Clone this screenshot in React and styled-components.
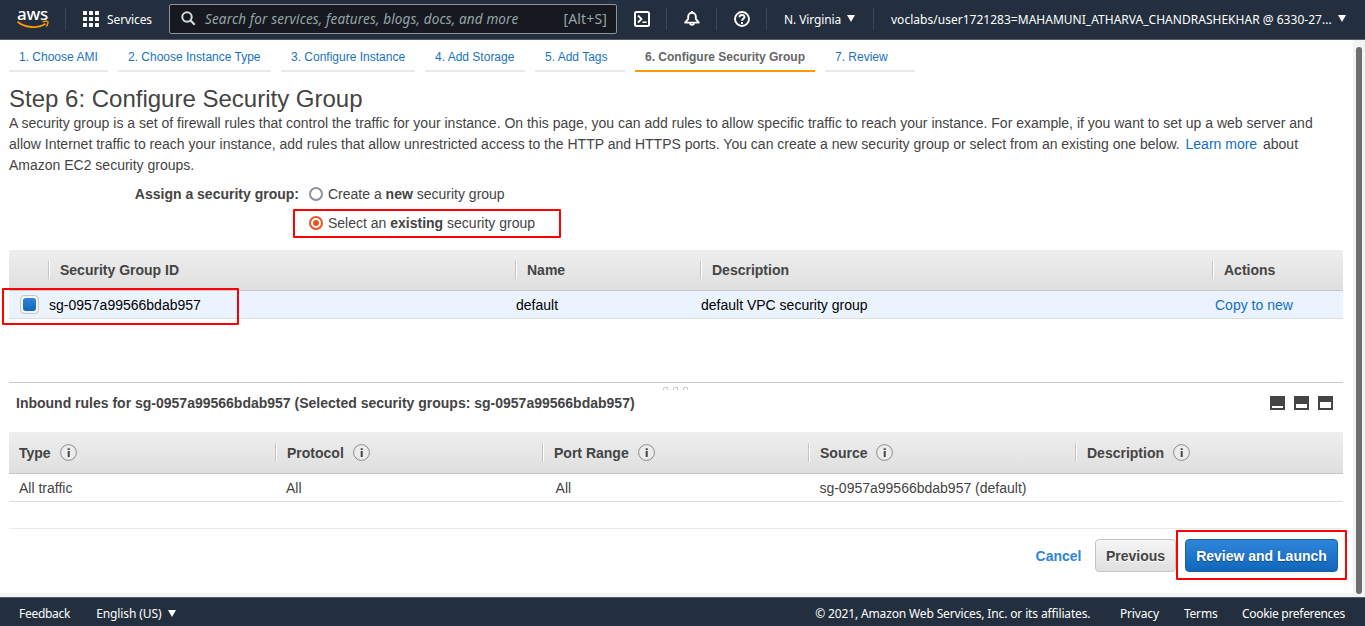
import React from 'react';
import styled, { createGlobalStyle, css } from 'styled-components';

const GlobalStyle = createGlobalStyle`
  * { box-sizing: border-box; }
  html, body { margin: 0; padding: 0; overflow: hidden; }
  body { font-family: "Liberation Sans", Arial, sans-serif; font-size: 14px; color: #444; background: #fff; }
`;

const Page = styled.div`
  display: flex;
  flex-direction: column;
  width: 1365px;
  height: 626px;
`;

const TopBar = styled.header`
  display: flex;
  align-items: center;
  flex: none;
  height: 40px;
  padding: 0 17px 1px 17px;
  background: #232f3e;
  border-bottom: 1px solid #545b64;
  color: #fff;
  font: 12px/20px "Noto Sans", sans-serif;
  white-space: nowrap;
  & > * {
    flex-shrink: 0;
  }
`;

const Logo = styled.div`
  display: flex;
  flex-direction: column;
  align-items: center;
  width: 31px;
  height: 23px;
  margin-right: 17px;
  margin-top: 1px;
`;

const LogoText = styled.span`
  font: 500 17px/15px "Noto Sans", sans-serif;
  letter-spacing: -0.3px;
  height: 14px;
  margin-top: -2px;
`;

const LogoSmile = styled.svg`
  flex: none;
`;

const Divider = styled.span`
  width: 1px;
  height: 22px;
  margin-bottom: 1px;
  background: #414750;
`;

const ServicesButton = styled.div`
  display: flex;
  align-items: center;
  gap: 8px;
  width: 86px;
  margin: 0 0 0 17px;
  letter-spacing: -0.1px;
`;

const Label = styled.span`
  padding-top: 1px;
`;

const SearchBox = styled.div`
  display: flex;
  align-items: center;
  width: 448px;
  height: 30px;
  margin-top: -1px;
  padding: 0 9px 0 11px;
  background: #16191f;
  border: 1px solid #879596;
  border-radius: 2px;
  color: #95a5a6;
  font-size: 14px;
`;

const SearchHint = styled.span`
  flex: 1;
  margin-left: 9px;
  font-size: 13.5px;
  letter-spacing: 0.15px;
  font-style: italic;
`;

const SearchKeys = styled.span`
  letter-spacing: 0.15px;
`;

const IconSlot = styled.span`
  display: flex;
  justify-content: center;
  width: 49px;
  margin-top: -1px;
`;

const Menu = styled.span`
  display: flex;
  align-items: center;
  gap: 6px;
  width: ${(p) => (p.$width ? `${p.$width}px` : 'auto')};
  padding-left: 17px;
  letter-spacing: ${(p) => p.$track || 0}px;
`;

const Middle = styled.div`
  display: flex;
  flex: none;
  height: 557px;
`;

const Content = styled.main`
  width: 1353px;
  height: 553px;
  padding: 0 10px 0 9px;
`;

const ScrollTrack = styled.div`
  width: 12px;
  padding: 7px 3px 3px;
  background: #f2f3f3;
`;

const ScrollThumb = styled.div`
  height: 547px;
  border-radius: 3px;
  background: #6e6e6e;
`;

const Strip = styled.div`
  display: flex;
  flex-direction: column;
  border-bottom: 4px solid #f2f3f3;
`;

const Tabs = styled.nav`
  display: flex;
  gap: 10px;
  height: 32px;
`;

const Tab = styled.span`
  width: ${(p) => p.$width}px;
  padding: 7px 0 0 10px;
  font-size: 12px;
  line-height: 20px;
  white-space: nowrap;
  color: ${(p) => (p.$active ? '#666' : '#1873bf')};
  font-weight: ${(p) => (p.$active ? 700 : 400)};
  border-bottom: 2px solid ${(p) => (p.$active ? '#ff9900' : '#eaeaea')};
`;

const Title = styled.h1`
  margin: 12px 0 0;
  font-size: 24px;
  font-weight: 400;
  line-height: 29px;
`;

const Intro = styled.p`
  margin: 0;
  height: 63px;
  line-height: 21px;
  white-space: nowrap;
`;

const Link = styled.a`
  color: #146ec4;
  margin: ${(p) => p.$margin || 0};
`;

const Assign = styled.div`
  display: grid;
  grid-template-columns: 290px auto;
  column-gap: 10px;
  height: 74px;
  padding-top: 4px;
  line-height: 29px;
`;

const AssignLabel = styled.b`
  text-align: right;
`;

const RadioRow = styled.div`
  display: flex;
  align-items: center;
  gap: 5px;
  height: 29px;
`;

const Radio = styled.span`
  display: flex;
  align-items: center;
  justify-content: center;
  width: 14px;
  height: 14px;
  margin-bottom: 1px;
  border-radius: 50%;
  border: 2px solid ${(p) => (p.$on ? '#e95420' : '#8f8f9d')};
  &::after {
    content: '';
    width: 6px;
    height: 6px;
    border-radius: 50%;
    background: ${(p) => (p.$on ? '#e95420' : 'transparent')};
  }
`;

const HeadRow = styled.div`
  display: grid;
  grid-template-columns: ${(p) => p.$cols};
  align-items: center;
  height: ${(p) => p.$height}px;
  background: linear-gradient(#eeeeee, #dfdfdf);
  border-bottom: 1px solid #c7c7c7;
  font-weight: 700;
`;

const HeadCell = styled.div`
  display: flex;
  align-items: center;
  gap: 9px;
  height: ${(p) => p.$height || 18}px;
  padding-left: 10px;
  ${(p) =>
    p.$line &&
    css`
      padding-left: 11px;
      border-left: 1px solid #c4c4c4;
      box-shadow: inset 1px 0 #fff;
    `}
`;

const DataRow = styled.div`
  display: grid;
  grid-template-columns: ${(p) => p.$cols};
  align-items: center;
  height: 28px;
  border-bottom: 1px solid #ddd;
  background: ${(p) => (p.$selected ? '#eaf3fe' : '#fff')};
  color: ${(p) => (p.$selected ? '#000' : '#444')};
`;

const Check = styled.span`
  display: flex;
  align-items: center;
  justify-content: center;
  width: 19px;
  height: 19px;
  margin-left: 11px;
  border: 1px solid #c8c8c8;
  border-radius: 4px;
  background: #f3f3f3;
  &::after {
    content: '';
    width: 13px;
    height: 13px;
    border-radius: 3px;
    background: linear-gradient(#2e85d8, #1166bb);
  }
`;

const Splitter = styled.div`
  display: flex;
  justify-content: center;
  gap: 5px;
  height: 8px;
  margin-top: 63px;
  padding: 4px 2px 0 0;
  border-top: 1px solid #c8c8c8;
`;

const Grip = styled.span`
  width: 5px;
  height: 3px;
  border: 1px solid #c4c4c4;
  border-bottom: 0;
  border-radius: 2px 2px 0 0;
`;

const PanelTitle = styled.div`
  display: flex;
  align-items: center;
  justify-content: space-between;
  height: 42px;
  padding: 0 10px 16px 7px;
  font-weight: 700;
`;

const PaneIcons = styled.div`
  display: flex;
  gap: 9px;
`;

const PaneIcon = styled.span`
  width: 15px;
  height: 14px;
  padding: ${(p) => p.$top}px 2px 2px;
  background: #444;
  &::after {
    content: '';
    display: block;
    height: 100%;
    background: #fff;
  }
`;

const Actions = styled.div`
  display: flex;
  align-items: center;
  justify-content: flex-end;
  height: 54px;
  margin-top: 26px;
  padding-right: 5px;
  border-top: 1px solid #eaeaea;
`;

const CancelLink = styled.a`
  margin-right: 13.5px;
  color: #2e85d8;
  font-weight: 700;
`;

const Button = styled.span`
  display: flex;
  align-items: center;
  justify-content: center;
  width: ${(p) => p.$width}px;
  height: 33px;
  border-radius: 4px;
  font-weight: 700;
  border: 1px solid ${(p) => (p.$primary ? '#1a5fa8' : '#c4c4c4')};
  color: ${(p) => (p.$primary ? '#fff' : '#444')};
  background: ${(p) =>
    p.$primary ? 'linear-gradient(#2e86db, #1166bb)' : 'linear-gradient(#f6f6f6, #dfdfdf)'};
  text-shadow: ${(p) => (p.$primary ? '0 1px 1px rgba(0,0,0,.35)' : '0 1px 0 #fff')};
  margin-left: ${(p) => (p.$primary ? 9 : 0)}px;
`;

const Footer = styled.footer`
  display: flex;
  align-items: center;
  flex: none;
  height: 29px;
  padding: 3px 20px 0 19px;
  background: #232f3e;
  border-top: 1px solid #545b64;
  color: #fff;
  font: 12px/20px "Noto Sans", sans-serif;
  white-space: nowrap;
`;

const FooterItem = styled.span`
  display: flex;
  align-items: center;
  gap: 6px;
  margin-right: ${(p) => p.$space || 0}px;
  letter-spacing: ${(p) => p.$track || 0}px;
`;

const Spacer = styled.span`
  flex: 1;
`;

const Highlight = styled.div`
  position: absolute;
  left: ${(p) => p.$x}px;
  top: ${(p) => p.$y}px;
  width: ${(p) => p.$w}px;
  height: ${(p) => p.$h}px;
  border: 2px solid #f00;
  border-radius: 1px;
  pointer-events: none;
`;

const CaretSvg = styled.svg`
  margin-bottom: 1px;
`;

const Caret = () => (
  <CaretSvg width="8" height="7" viewBox="0 0 8 7">
    <path d="M0 0h8L4 7z" fill="#fff" />
  </CaretSvg>
);

const Info = () => (
  <svg width="18" height="18" viewBox="0 0 18 18">
    <circle cx="8.500" cy="8.500" r="7.900" fill="#ececec" stroke="#8a8a8a" />
    <path d="M7.700 4.200h2v1.800h-2zM7.700 7h2v6h-2z" fill="#444" />
  </svg>
);

const groupCols = '39px 467px 185px 512px 1fr';
const groupDataCols = '40px 467px 185px 514px 1fr';
const ruleCols = '266px 267px 266px 267px 1fr';
const ruleDataCols = '267px 269.6px 263.8px 267px 1fr';

const tabs = [
  ['1. Choose AMI', 99],
  ['2. Choose Instance Type', 153],
  ['3. Configure Instance', 134],
  ['4. Add Storage', 100],
  ['5. Add Tags', 90],
  ['6. Configure Security Group', 180],
  ['7. Review', 90],
];

const ruleHeads = ['Type', 'Protocol', 'Port Range', 'Source', 'Description'];

const DataText = styled.span`
  padding-left: ${(p) => p.$pad || 0}px;
`;

export default function App() {
  return (
    <Page>
      <GlobalStyle />
      <TopBar>
        <Logo>
          <LogoText>aws</LogoText>
          <LogoSmile width="32" height="9" viewBox="0 0 32 9" fill="none" stroke="#f90">
            <path d="M.5 1.700C8.500 8.200 20.500 8.700 28.500 3.700" strokeWidth="1.8" />
            <path d="M25.500 1.900C28 1 30.500 1.200 30.900 1.700S30.500 5 29.300 6.500" strokeWidth="1.400" />
          </LogoSmile>
        </Logo>
        <Divider />
        <ServicesButton>
          <svg width="16" height="16" viewBox="0 0 16 16" fill="#fff">
            {[0, 6, 12].map((y) =>
              [0, 6, 12].map((x) => <rect key={`${x}-${y}`} x={x} y={y} width="4" height="4" rx=".6" />)
            )}
          </svg>
          <Label>Services</Label>
        </ServicesButton>
        <SearchBox>
          <svg width="15" height="15" viewBox="0 0 15 15" fill="none" stroke="#d5dbdb" strokeWidth="2">
            <circle cx="6" cy="6" r="4.700" />
            <path d="M9.300 9.300l4.400 4.400" strokeWidth="2.200" />
          </svg>
          <SearchHint>Search for services, features, blogs, docs, and more</SearchHint>
          <SearchKeys>[Alt+S]</SearchKeys>
        </SearchBox>
        <IconSlot>
          <svg width="16" height="16" viewBox="0 0 16 16" fill="none" stroke="#fff" strokeWidth="2">
            <rect x="1" y="1" width="14" height="14" rx="1.500" />
            <path d="M4 4.500L7.500 8 4 11.500" strokeWidth="1.800" />
            <path d="M8.500 11.200h4" strokeWidth="1.600" />
          </svg>
        </IconSlot>
        <Divider />
        <IconSlot>
          <svg width="16" height="16" viewBox="0 0 16 16" fill="none" stroke="#fff" strokeWidth="1.900" strokeLinejoin="round">
            <path d="M8 0v2M1.200 11.600h13.600L11.800 7.800V5.600a3.800 3.800 0 0 0-7.600 0v2.200z" />
            <path d="M5.800 12.200a2.300 2.300 0 0 0 4.400 0" />
          </svg>
        </IconSlot>
        <Divider />
        <IconSlot>
          <svg width="16" height="16" viewBox="0 0 16 16" fill="none" stroke="#fff" strokeWidth="1.900">
            <circle cx="8" cy="8" r="7" />
            <path d="M5.500 6.200C5.500 3.200 10.500 3.200 10.500 6.100 10.500 7.700 8 7.700 8 9.800M8 10.900v2" />
          </svg>
        </IconSlot>
        <Divider />
        <Menu $width={106} $track={-0.1}>
          <Label>N. Virginia</Label> <Caret />
        </Menu>
        <Divider />
        <Menu $track={0.02}>
          <Label>voclabs/user1721283=MAHAMUNI_ATHARVA_CHANDRASHEKHAR @ 6330-27...</Label> <Caret />
        </Menu>
      </TopBar>

      <Middle>
        <Strip>
          <Content>
            <Tabs>
              {tabs.map(([label, width], i) => (
                <Tab key={label} $width={width} $active={i === 5}>
                  {label}
                </Tab>
              ))}
            </Tabs>
            <Title>Step 6: Configure Security Group</Title>
            <Intro>
              A security group is a set of firewall rules that control the traffic for your instance. On this page, you can
              add rules to allow specific traffic to reach your instance. For example, if you want to set up a web server and
              <br />
              allow Internet traffic to reach your instance, add rules that allow unrestricted access to the HTTP and HTTPS
              ports. You can create a new security group or select from an existing one below.{' '}
              <Link $margin="0 2px">Learn more</Link> about
              <br />
              Amazon EC2 security groups.
            </Intro>
            <Assign>
              <AssignLabel>Assign a security group:</AssignLabel>
              <div>
                <RadioRow>
                  <Radio />
                  <span>
                    Create a <b>new</b> security group
                  </span>
                </RadioRow>
                <RadioRow>
                  <Radio $on />
                  <span>
                    Select an <b>existing</b> security group
                  </span>
                </RadioRow>
              </div>
            </Assign>

            <HeadRow $cols={groupCols} $height={41}>
              <HeadCell />
              <HeadCell $line>Security Group ID</HeadCell>
              <HeadCell $line>Name</HeadCell>
              <HeadCell $line>Description</HeadCell>
              <HeadCell $line>Actions</HeadCell>
            </HeadRow>
            <DataRow $cols={groupDataCols} $selected>
              <Check />
              <span>sg-0957a99566bdab957</span>
              <span>default</span>
              <span>default VPC security group</span>
              <Link>Copy to new</Link>
            </DataRow>

            <Splitter>
              <Grip />
              <Grip />
              <Grip />
            </Splitter>
            <PanelTitle>
              <span>Inbound rules for sg-0957a99566bdab957 (Selected security groups: sg-0957a99566bdab957)</span>
              <PaneIcons>
                <PaneIcon $top={10} />
                <PaneIcon $top={8} />
                <PaneIcon $top={6} />
              </PaneIcons>
            </PanelTitle>
            <HeadRow $cols={ruleCols} $height={42}>
              {ruleHeads.map((label, i) => (
                <HeadCell key={label} $line={i > 0} $height={19}>
                  {label}
                  <Info />
                </HeadCell>
              ))}
            </HeadRow>
            <DataRow $cols={ruleDataCols}>
              <DataText $pad={10}>All traffic</DataText>
              <DataText $pad={10}>All</DataText>
              <DataText $pad={10}>All</DataText>
              <DataText $pad={10}>sg-0957a99566bdab957 (default)</DataText>
            </DataRow>

            <Actions>
              <CancelLink>Cancel</CancelLink>
              <Button $width={81}>Previous</Button>
              <Button $width={153} $primary>
                Review and Launch
              </Button>
            </Actions>
          </Content>
        </Strip>
        <ScrollTrack>
          <ScrollThumb />
        </ScrollTrack>
      </Middle>

      <Footer>
        <FooterItem $space={26} $track={-0.28}>Feedback</FooterItem>
        <FooterItem $track={-0.1}>
          English (US) <Caret />
        </FooterItem>
        <Spacer />
        <FooterItem $space={29.5} $track={-0.14}>© 2021, Amazon Web Services, Inc. or its affiliates.</FooterItem>
        <FooterItem $space={25} $track={-0.15}>Privacy</FooterItem>
        <FooterItem $space={24.5} $track={-0.2}>Terms</FooterItem>
        <FooterItem $track={-0.3}>Cookie preferences</FooterItem>
      </Footer>

      <Highlight $x={293} $y={209} $w={268} $h={29} />
      <Highlight $x={2} $y={288} $w={237} $h={37} />
      <Highlight $x={1176} $y={530} $w={171} $h={50} />
    </Page>
  );
}
